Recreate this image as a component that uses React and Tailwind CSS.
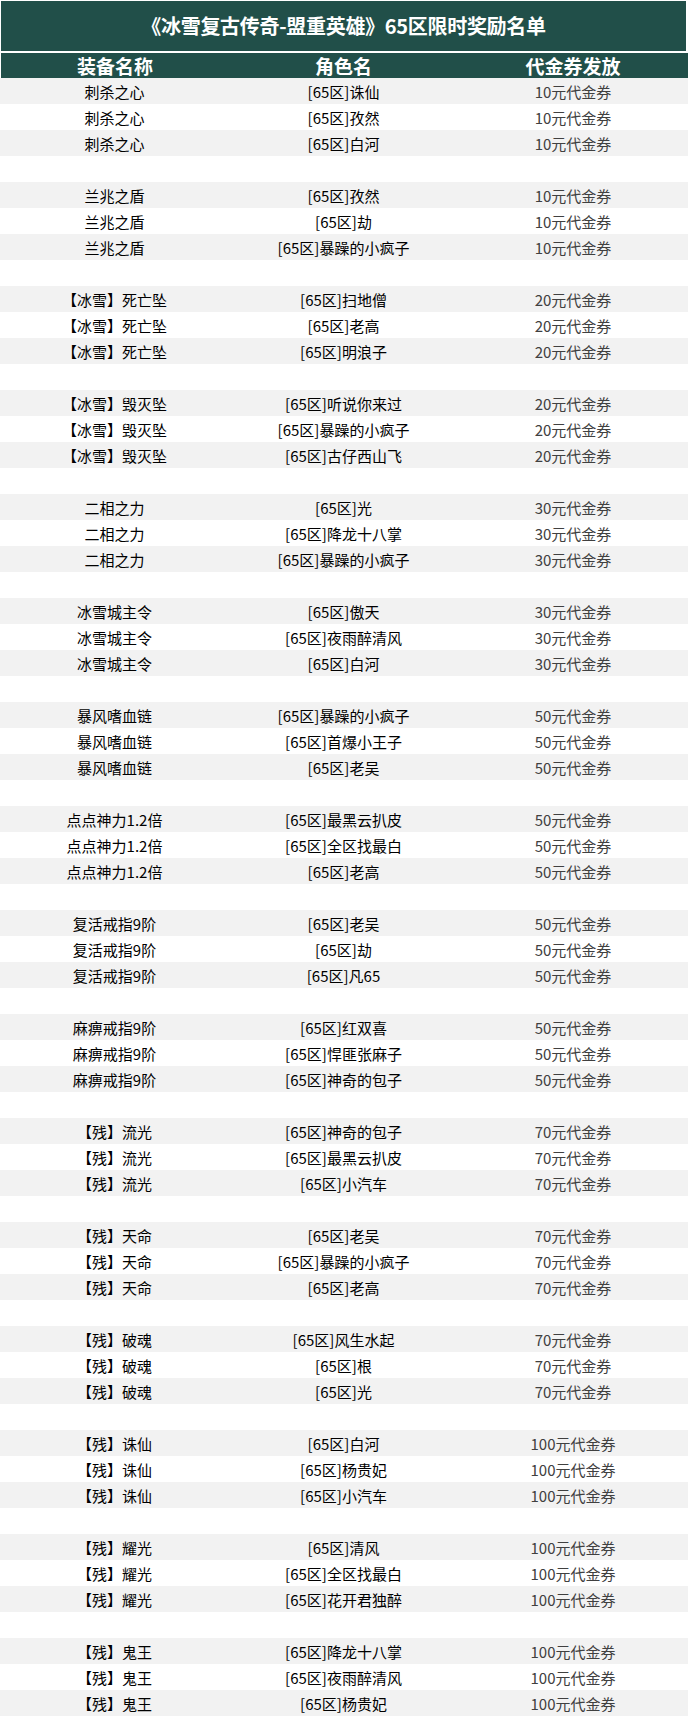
const GROUPS = [
  { item: '刺杀之心', amt: 10, names: ['诛仙', '孜然', '白河'] },
  { item: '兰兆之盾', amt: 10, names: ['孜然', '劫', '暴躁的小疯子'] },
  { item: '【冰雪】死亡坠', amt: 20, names: ['扫地僧', '老高', '明浪子'] },
  { item: '【冰雪】毁灭坠', amt: 20, names: ['听说你来过', '暴躁的小疯子', '古仔西山飞'] },
  { item: '二相之力', amt: 30, names: ['光', '降龙十八掌', '暴躁的小疯子'] },
  { item: '冰雪城主令', amt: 30, names: ['傲天', '夜雨醉清风', '白河'] },
  { item: '暴风嗜血链', amt: 50, names: ['暴躁的小疯子', '首爆小王子', '老吴'] },
  { item: '点点神力1.2倍', amt: 50, names: ['最黑云扒皮', '全区找最白', '老高'] },
  { item: '复活戒指9阶', amt: 50, names: ['老吴', '劫', '凡65'] },
  { item: '麻痹戒指9阶', amt: 50, names: ['红双喜', '悍匪张麻子', '神奇的包子'] },
  { item: '【残】流光', amt: 70, names: ['神奇的包子', '最黑云扒皮', '小汽车'] },
  { item: '【残】天命', amt: 70, names: ['老吴', '暴躁的小疯子', '老高'] },
  { item: '【残】破魂', amt: 70, names: ['风生水起', '根', '光'] },
  { item: '【残】诛仙', amt: 100, names: ['白河', '杨贵妃', '小汽车'] },
  { item: '【残】耀光', amt: 100, names: ['清风', '全区找最白', '花开君独醉'] },
  { item: '【残】鬼王', amt: 100, names: ['降龙十八掌', '夜雨醉清风', '杨贵妃'] },
]

const font = { fontFamily: '"Noto Sans CJK SC", sans-serif' }

function Row({ item, name, amt, gray }) {
  return (
    <div className={`grid grid-cols-[229px_229px_230px] h-[26px] items-center text-[15px] leading-none ${gray ? 'bg-[#f2f2f2]' : 'bg-white'}`}>
      <div className="text-center text-black">{item}</div>
      <div className="text-center text-black">[65区]{name}</div>
      <div className="text-center text-[#404040]">{amt}元代金券</div>
    </div>
  )
}

export default function App() {
  return (
    <div className="w-[688px] bg-white pt-px" style={font}>
      {/* Title */}
      <div className="ml-px w-[685px] h-[50px] bg-[#214f49] flex items-center justify-center">
        <span className="text-white font-bold text-[20px] tracking-[-0.3px]">《冰雪复古传奇-盟重英雄》65区限时奖励名单</span>
      </div>

      {/* Column headers */}
      <div className="mt-[2px] ml-px w-[687px] h-[25px] bg-[#214f49] grid grid-cols-[228px_229px_230px] items-center text-white font-bold text-[19px] leading-none">
        <div className="text-center">装备名称</div>
        <div className="text-center">角色名</div>
        <div className="text-center">代金券发放</div>
      </div>

      {/* Rows */}
      {GROUPS.map((g, gi) => (
        <div key={gi}>
          {g.names.map((n, i) => (
            <Row key={i} item={g.item} name={n} amt={g.amt} gray={i !== 1} />
          ))}
          {gi < GROUPS.length - 1 && <div className="h-[26px] bg-white" />}
        </div>
      ))}
    </div>
  )
}
